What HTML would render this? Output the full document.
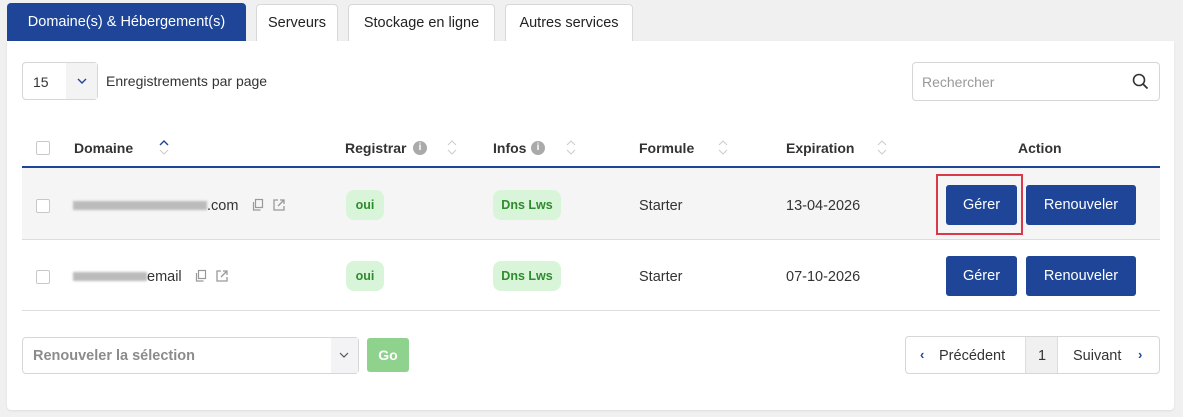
<!DOCTYPE html>
<html><head><meta charset="utf-8"><style>
*{box-sizing:border-box;margin:0;padding:0}
body{width:1183px;height:417px;background:#f0f0f0;font-family:"Liberation Sans",sans-serif;font-size:14px;color:#333;position:relative;overflow:hidden}
.a{position:absolute}
.tab{position:absolute;top:4px;height:37px;background:#fff;border:1px solid #d8d8d8;border-bottom:none;border-radius:4px 4px 0 0;font-size:14.5px;color:#222;display:flex;align-items:center;justify-content:center}
.card{position:absolute;left:7px;top:41px;width:1167px;height:369px;background:#fff;border-radius:0 0 4px 4px;box-shadow:0 1px 2px rgba(0,0,0,.08)}
.box{border:1px solid #d6d6d6;border-radius:4px;background:#fff}
.th{position:absolute;top:140px;font-weight:bold;font-size:14px;color:#333}
.sort{position:absolute;width:12px;height:20px}
.cb{position:absolute;width:14px;height:14px;border:1px solid #c8c8c8;border-radius:2px;background:#fff}
.pill{position:absolute;height:30px;background:#d9f5d9;color:#2e8b2e;border-radius:8px;font-weight:bold;font-size:12.5px;display:flex;align-items:center;justify-content:center}
.btn{position:absolute;height:40px;background:#1e4597;color:#fff;border-radius:3px;font-size:14.5px;display:flex;align-items:center;justify-content:center}
.blur{position:absolute;height:9px;background:#bbb;filter:blur(1px)}
</style></head><body>
<div class="tab" style="left:7px;top:3px;width:239px;height:38px;background:#1e4597;color:#fff;border:none">Domaine(s) &amp; Hébergement(s)</div>
<div class="tab" style="left:256px;width:82px">Serveurs</div>
<div class="tab" style="left:348px;width:147px">Stockage en ligne</div>
<div class="tab" style="left:505px;width:128px">Autres services</div>
<div class="card"></div>

<div class="a box" style="left:22px;top:62px;width:76px;height:38px"></div>
<div class="a" style="left:66px;top:63px;width:31px;height:36px;background:#f3f3f3"></div>
<div class="a" style="left:33px;top:74px;font-size:14px">15</div>
<svg class="a" style="left:77px;top:77px" width="10" height="8"><path d="M1 2l4 4 4-4" fill="none" stroke="#1e4597" stroke-width="1.4"/></svg>
<div class="a" style="left:106px;top:73px;font-size:14px;color:#333">Enregistrements par page</div>

<div class="a box" style="left:912px;top:62px;width:248px;height:39px"></div>
<div class="a" style="left:922px;top:74px;color:#999;font-size:14px">Rechercher</div>
<svg class="a" style="left:1132px;top:73px" width="17" height="17"><circle cx="7" cy="7" r="5.5" fill="none" stroke="#333" stroke-width="1.6"/><path d="M11 11l4.5 4.5" stroke="#333" stroke-width="1.8"/></svg>

<div class="cb" style="left:36px;top:141px"></div>
<div class="th" style="left:74px">Domaine</div>
<svg class="sort" style="left:158px;top:137px"><path d="M2 8l4-4 4 4" fill="none" stroke="#1e4597" stroke-width="1.4"/><path d="M2 13l4 4 4-4" fill="none" stroke="#ccc" stroke-width="1"/></svg>
<div class="th" style="left:345px">Registrar</div>
<div class="a" style="left:413px;top:141px;width:14px;height:14px;border-radius:50%;background:#aaa;color:#fff;font-size:10px;font-weight:bold;text-align:center;line-height:14px">i</div>
<div class="th" style="left:493px">Infos</div>
<div class="a" style="left:531px;top:141px;width:14px;height:14px;border-radius:50%;background:#aaa;color:#fff;font-size:10px;font-weight:bold;text-align:center;line-height:14px">i</div>
<div class="th" style="left:639px">Formule</div>
<div class="th" style="left:786px">Expiration</div>
<div class="th" style="left:1018px">Action</div>
<svg class="sort" style="left:446px;top:137px"><path d="M2 8l4-4 4 4M2 13l4 4 4-4" fill="none" stroke="#ccc" stroke-width="1"/></svg>
<svg class="sort" style="left:565px;top:137px"><path d="M2 8l4-4 4 4M2 13l4 4 4-4" fill="none" stroke="#ccc" stroke-width="1"/></svg>
<svg class="sort" style="left:717px;top:137px"><path d="M2 8l4-4 4 4M2 13l4 4 4-4" fill="none" stroke="#ccc" stroke-width="1"/></svg>
<svg class="sort" style="left:876px;top:137px"><path d="M2 8l4-4 4 4M2 13l4 4 4-4" fill="none" stroke="#ccc" stroke-width="1"/></svg>
<div class="a" style="left:22px;top:166px;width:1138px;height:2px;background:#1e4597"></div>

<div class="a" style="left:22px;top:168px;width:1138px;height:72px;background:#f5f5f5;border-bottom:1px solid #ddd"></div>
<div class="a" style="left:22px;top:240px;width:1138px;height:71px;border-bottom:1px solid #ddd"></div>

<div class="cb" style="left:36px;top:199px"></div>
<div class="blur" style="left:73px;top:201px;width:134px"></div>
<div class="a" style="left:207px;top:198px;font-size:14.5px">.com</div>
<svg class="a" style="left:251px;top:198px" width="14" height="14"><rect x="4.5" y="1.5" width="7" height="8" fill="none" stroke="#999" stroke-width="1.2"/><path d="M2.5 4v8h7" fill="none" stroke="#999" stroke-width="1.2"/></svg>
<svg class="a" style="left:272px;top:198px" width="14" height="14"><path d="M6 2H2v10h10V8M8 2h4v4M12 2L6 8" fill="none" stroke="#999" stroke-width="1.3"/></svg>
<div class="pill" style="left:346px;top:190px;width:38px">oui</div>
<div class="pill" style="left:493px;top:190px;width:68px">Dns Lws</div>
<div class="a" style="left:639px;top:198px;font-size:14.5px">Starter</div>
<div class="a" style="left:786px;top:198px;font-size:14.5px">13-04-2026</div>
<div class="a" style="left:936px;top:174px;width:87px;height:61px;border:2px solid #d9394b"></div>
<div class="btn" style="left:946px;top:185px;width:71px">Gérer</div>
<div class="btn" style="left:1026px;top:185px;width:110px">Renouveler</div>

<div class="cb" style="left:36px;top:270px"></div>
<div class="blur" style="left:73px;top:272px;width:74px"></div>
<div class="a" style="left:147px;top:269px;font-size:14.5px">email</div>
<svg class="a" style="left:194px;top:269px" width="14" height="14"><rect x="4.5" y="1.5" width="7" height="8" fill="none" stroke="#999" stroke-width="1.2"/><path d="M2.5 4v8h7" fill="none" stroke="#999" stroke-width="1.2"/></svg>
<svg class="a" style="left:215px;top:269px" width="14" height="14"><path d="M6 2H2v10h10V8M8 2h4v4M12 2L6 8" fill="none" stroke="#999" stroke-width="1.3"/></svg>
<div class="pill" style="left:346px;top:261px;width:38px">oui</div>
<div class="pill" style="left:493px;top:261px;width:68px">Dns Lws</div>
<div class="a" style="left:639px;top:269px;font-size:14.5px">Starter</div>
<div class="a" style="left:786px;top:269px;font-size:14.5px">07-10-2026</div>
<div class="btn" style="left:946px;top:256px;width:71px">Gérer</div>
<div class="btn" style="left:1026px;top:256px;width:110px">Renouveler</div>

<div class="a box" style="left:22px;top:337px;width:337px;height:37px"></div>
<div class="a" style="left:331px;top:338px;width:27px;height:35px;background:#f3f3f6"></div>
<svg class="a" style="left:339px;top:351px" width="10" height="8"><path d="M1 2l4 4 4-4" fill="none" stroke="#555" stroke-width="1.2"/></svg>
<div class="a" style="left:33px;top:348px;font-size:14.5px;color:#777;font-weight:bold;opacity:.85">Renouveler la sélection</div>
<div class="a" style="left:367px;top:338px;width:42px;height:34px;background:#8ed28e;color:#fff;border-radius:3px;font-weight:bold;display:flex;align-items:center;justify-content:center">Go</div>

<div class="a box" style="left:905px;top:336px;width:255px;height:38px"></div>
<div class="a" style="left:1025px;top:337px;width:33px;height:36px;background:#f0f0f0;border-left:1px solid #ddd;border-right:1px solid #ddd"></div>
<div class="a" style="left:920px;top:347px;color:#1e4597;font-weight:bold;font-size:13px">‹</div>
<div class="a" style="left:939px;top:348px;font-size:14.5px">Précédent</div>
<div class="a" style="left:1038px;top:348px;font-size:14.5px">1</div>
<div class="a" style="left:1073px;top:348px;font-size:14.5px">Suivant</div>
<div class="a" style="left:1138px;top:347px;color:#1e4597;font-weight:bold;font-size:13px">›</div>
</body></html>
